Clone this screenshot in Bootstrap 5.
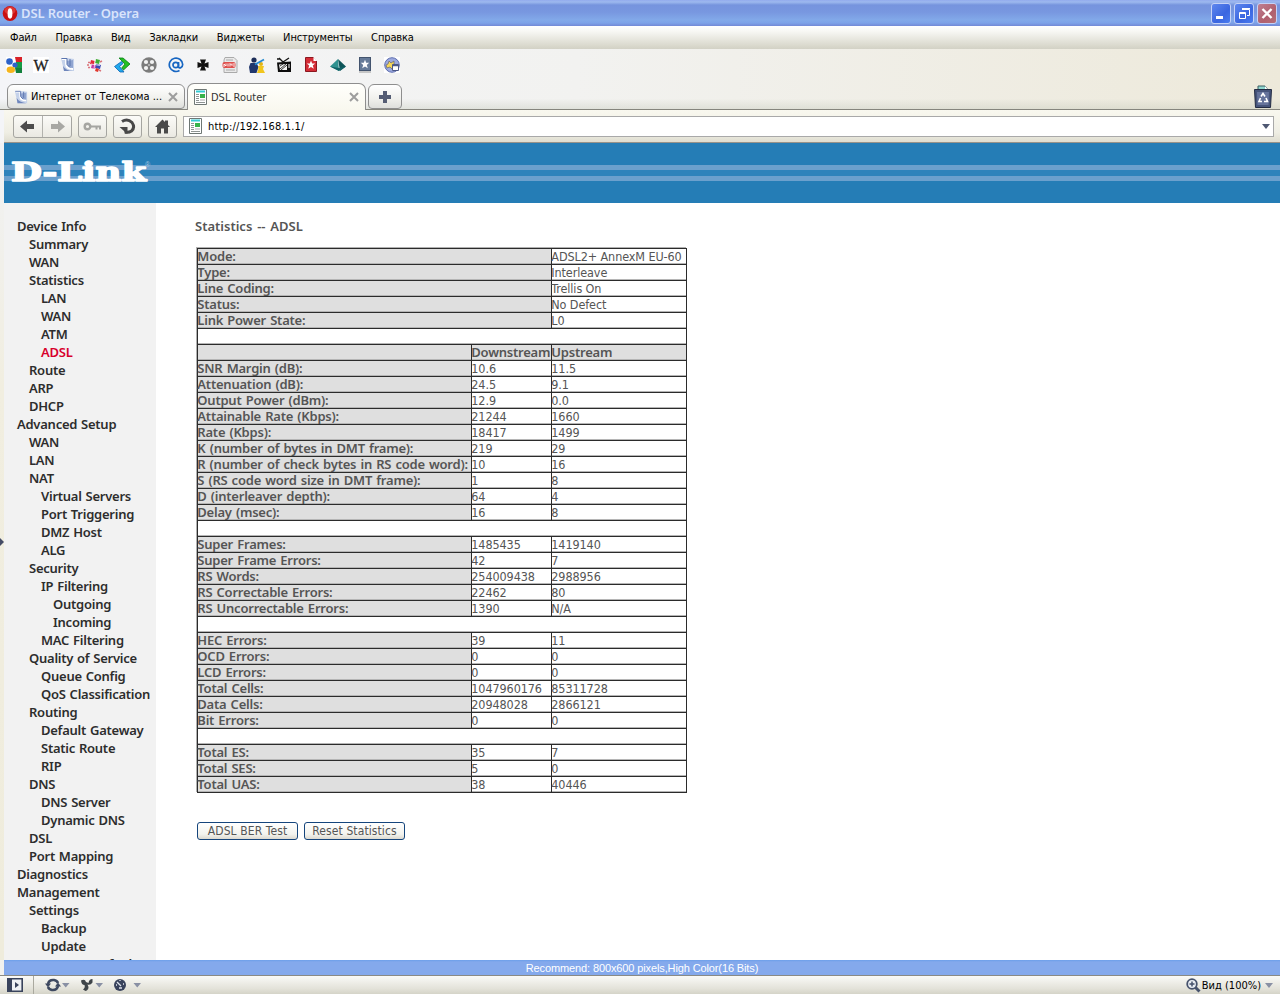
<!DOCTYPE html>
<html lang="ru">
<head>
  <meta charset="UTF-8" />
  <meta name="viewport" content="width=device-width, initial-scale=1.0"/>
  <title>DSL Router</title>

  <!-- Bootstrap CSS -->
  <link href="https://cdn.jsdelivr.net/npm/bootstrap@5.3.3/dist/css/bootstrap.min.css" rel="stylesheet" />

  <style>
    body {
      height: 994px;
      font-family: "DejaVu Sans Condensed", "DejaVu Sans", sans-serif;
      font-size: 11px;
      line-height: 1;
      color: #000;
      background: #f1f1ee;
    }

    svg { display: block; flex: none; }

    /* Window title */
    .titlebar {
      height: 26px;
      padding: 1px 3px 0 2px;
      background: linear-gradient(#93abee 0, #9db9ee 2px, #7694de 5px, #7897e0 12px, #82a9e9 20px, #7da2e8 23px, #7289d6 26px);
    }
    .titlebar .caption {
      font-family: "Noto Sans", sans-serif;
      font-weight: 600;
      font-size: 13px;
      letter-spacing: -.12px;
      color: #d9e4fb;
      margin-left: 3px;
    }
    .winbtn {
      width: 20px;
      height: 21px;
      border: 1px solid #c5d2f7;
      border-radius: 3px;
      background: linear-gradient(135deg, #5f87ee, #3a66e0 60%, #4a7cf0);
    }
    .winbtn.shut { background: linear-gradient(135deg, #bf7f92, #b0606e 60%, #b56f78); }

    /* Menu */
    .menubar {
      height: 23px;
      padding-left: 10px;
      gap: 18.6px;
      letter-spacing: -.13px;
      background: linear-gradient(#fff 0, #f6f6f2 6px, #d9d8cc 20px, #d2d1c5 23px);
    }

    .chrome { background: linear-gradient(90deg, #f4f5f8 0, #f2f2f0 45%, #ede9da 100%); }
    .bookmarks {
      height: 34px;
      padding: 0 0 2px 6px;
      gap: 11px;
    }
    .bookmarks svg { width: 16px; height: 16px; }

    /* Tabs */
    .tabstrip {
      height: 27px;
      padding-left: 7px;
      border-bottom: 1px solid #85857d;
      background: linear-gradient(transparent 60%, rgba(190, 195, 180, .35));
    }
    .pagetab {
      height: 25px;
      border: 1px solid #8e8e8e;
      border-radius: 6px 6px 4px 4px;
      background: linear-gradient(#fff, #f0f0ec 60%, #dedfdc);
      padding: 0 6px 0 6px;
    }
    .pagetab.current {
      height: 27px;
      margin-bottom: -1px;
      border-bottom: 0;
      border-radius: 7px 7px 0 0;
      background: linear-gradient(#fffffc, #f9f8ef);
      color: #333;
    }
    .tabicon { margin-right: 3px; }

    /* Address row */
    .addressrow {
      height: 33px;
      padding: 0 6px 0 9px;
      margin-left: 4px;
      border-bottom: 1px solid #97928a;
      background: linear-gradient(#f9f8ef, #efeee4 70%, #dfddd0);
    }
    .tool {
      height: 23px;
      width: 29px;
      border: 1px solid #a5a5a0;
      border-radius: 3px;
      background: linear-gradient(#fbfbf8, #eae9e2);
    }
    .urlfield {
      height: 21px;
      border: 1px solid #a9a9a9;
      background: #fff;
      padding: 0 3px 0 4px;
    }
    .url { letter-spacing: .16px; }

    /* Router page */
    .gutter { width: 4px; padding-bottom: 20px; background: linear-gradient(#f1f2f4, #f1eee0 30%, #efecdc); }
    .banner {
      height: 60px;
      background: linear-gradient(#257db6 0 22px, #6ba0cd 22px 27px, #2e83bb 27px 33px, #6ba0cd 33px 38px, #257db6 38px);
    }
    .sidemenu {
      width: 152px;
      height: 757px;
      padding-top: 14px;
      background: #f2f2f2;
      font: 600 13px/18px "Noto Sans", sans-serif;
      letter-spacing: -.25px;
      word-spacing: .8px;
      color: #2d2d2d;
    }
    .sidemenu div { height: 18px; white-space: nowrap; }
    .lv0 { padding-left: 13px; }
    .lv1 { padding-left: 25px; }
    .lv2 { padding-left: 37px; }
    .lv3 { padding-left: 49px; }
    .here { color: #d8002c; }

    .report { padding: 14px 0 0 39px; color: #555; font-size: 12.5px; }
    .report h1 { font: 600 13px/18px "Noto Sans", sans-serif; word-spacing: 1.5px; margin: 0 0 13px; }
    .stats {
      width: 490px;
      margin-left: 2px;
      table-layout: fixed;
      border-collapse: collapse;
      line-height: 15px;
      letter-spacing: -.1px;
      box-shadow: -1px -1px #b0b0b0;
    }
    .stats td, .stats th {
      height: 16px;
      padding: 0;
      border: 1px solid #2b2b2b;
      box-shadow: inset 0 -1px #b5b5b5;
      white-space: nowrap;
      text-indent: -.7px;
    }
    .stats th {
      background: #dfdfdf;
      font: 600 13px/15px "Noto Sans", sans-serif;
      letter-spacing: -.22px;
      word-spacing: 1px;
    }
    .formbtn {
      width: 101px;
      height: 18px;
      border: 1px solid #15457c;
      border-radius: 3px;
      background: linear-gradient(#fff, #f3f3ee 70%, #dcd9cf);
      color: #555;
      font-size: 12px;
      letter-spacing: .1px;
      padding: 0;
    }

    .hintbar {
      height: 15px;
      margin-left: 4px;
      background: linear-gradient(#6c9fea, #84a9ec 2px);
      color: #fff;
      font: 11px/17px "Liberation Sans", Arial, sans-serif;
      letter-spacing: -.12px;
    }
    .statusrow {
      height: 19px;
      padding: 0 7px;
      border-top: 1px solid #8a8a84;
      background: linear-gradient(#fafaf7, #e3e2d9 70%, #d5d4c8);
    }
  </style>
</head>
<body class="d-flex flex-column overflow-hidden">

  <!-- Title -->
  <header class="titlebar d-flex align-items-center">
    <svg width="16" height="16" viewBox="0 0 16 16"><ellipse cx="8" cy="7.500" rx="7.300" ry="7.500" fill="#c90f12"/><ellipse cx="8" cy="4.500" rx="5.500" ry="3.800" fill="#e9504a" opacity=".6"/><ellipse cx="8" cy="7.500" rx="2.400" ry="5.200" fill="#fff"/></svg>
    <span class="caption">DSL Router - Opera</span>
    <div class="d-flex ms-auto" style="gap:3px">
      <span class="winbtn"><svg width="18" height="19"><rect x="4" y="12" width="7" height="3" fill="#fff"/></svg></span>
      <span class="winbtn"><svg width="18" height="19" fill="none" stroke="#fff"><path d="M7 5.500h7.500v6H12M7 4.500h8"/><path d="M4.500 8.500h6v6h-6zM4 9.500h7"/></svg></span>
      <span class="winbtn shut"><svg width="18" height="19"><path d="M4.500 5l9 9M13.500 5l-9 9" stroke="#fff" stroke-width="2.400"/></svg></span>
    </div>
  </header>

  <!-- Menu -->
  <nav class="menubar d-flex align-items-center">
    <span>Файл</span><span>Правка</span><span>Вид</span><span>Закладки</span><span>Виджеты</span><span>Инструменты</span><span>Справка</span>
  </nav>

  <div class="chrome">
    <!-- Bookmarks -->
    <div class="bookmarks d-flex align-items-center">
      <svg viewBox="0 0 16 16"><path d="M7 0h9v5H7z" fill="#d82027"/><path d="M9 5h7v6H9z" fill="#169b45"/><path d="M9 11h7v5H8z" fill="#12803b"/><path d="M0 0h9l1 5-1 6 1 5H0z" fill="#fff"/><circle cx="3.500" cy="4.500" r="3.300" fill="#2c62c9"/><circle cx="9" cy="8" r="2.600" fill="#2c62c9"/><ellipse cx="4.800" cy="12.700" rx="4.200" ry="3.200" fill="#f5b51c"/></svg>
      <svg viewBox="0 0 16 16"><rect width="16" height="16" fill="#fff"/><text x=".5" y="13.500" font-family="Liberation Serif, serif" font-size="16" fill="#222" stroke="#222" stroke-width=".3" textLength="15" lengthAdjust="spacingAndGlyphs">W</text></svg>
      <svg viewBox="0 0 16 16"><path d="M1 1l6 0 7 1v12H4z" fill="#c5d2ea"/><path d="M3 9q3 5 10 5H4z" fill="#6f86bb"/><path d="M7 4l6-1v9q-5-1-6-5z" fill="#8fa4d0"/><path d="M2 2h4v5q0 5 7 5" fill="none" stroke="#fff" stroke-width="1.800"/><path d="M1.500 1.500h5.500v6l3 3M10 2v7" fill="none" stroke="#5a74ae"/></svg>
      <svg viewBox="0 0 16 16"><path d="M4 3l4 1-1 4-4-1z" fill="#e02b39"/><path d="M9 2l4 1-1 4-4-1z" fill="#3fae35"/><path d="M9 7l5 1-1 4-5-1z" fill="#3b49b5"/><path d="M5 7l4 1-1 4-4-1z" fill="#c438a6"/><path d="M9 11l3 1-1 3-3-1z" fill="#e1382d"/><path d="M1 5.500h2M0 8h2M1 10.500h2M13 5l2-1M12 13l2 1" stroke="#d9757c" stroke-width="1.400"/><path d="M8 3L7 13M4 7l9 1.500" stroke="#fff" stroke-width=".7"/></svg>
      <svg viewBox="0 0 16 16"><path d="M5 1h4l7 6-6.500 6-1.800-2L11 7z" fill="#25c023" stroke="#087f18" stroke-width=".8"/><path d="M7.500 4.500l1.500 2-3.500 3 4.500 5.500H6L.5 9.500z" fill="#20a9ec" stroke="#0a61b4" stroke-width=".8"/></svg>
      <svg viewBox="0 0 16 16"><circle cx="8" cy="8" r="7.700" fill="#7c7c7c"/><g fill="#f3f3f3"><circle cx="5" cy="5" r="2.100"/><circle cx="11" cy="5" r="2.100"/><circle cx="5" cy="11" r="2.100"/><circle cx="11" cy="11" r="2.100"/><circle cx="8" cy="8" r=".8"/></g></svg>
      <svg viewBox="0 0 16 16" fill="none" stroke="#1766c2" stroke-width="1.700"><circle cx="7.700" cy="8" r="2.700"/><path d="M10.500 5v4.500q.3 1.800 2 1.400Q14.700 10 14.700 7.500A6.700 6.700 0 1 0 11.500 13.500"/></svg>
      <svg viewBox="0 0 16 16"><path d="M5 2.500h6L9.500 6.500l4-1.500v6l-4-1.500 1.500 4H5l1.500-4-4 1.500V5l4 1.500z" fill="#111"/></svg>
      <svg viewBox="0 0 16 16"><path d="M3 .5h9l3 3v12H2V3z" fill="#e9e9e9" stroke="#aaa"/><path d="M4 3h7M4 13h9" stroke="#aaa"/><rect x=".5" y="5" width="13" height="6" rx="2" fill="#df4f4c"/><path d="M2 10V7l2 2V6.500M6 6.500v3M8 9.500v-3l2 2v-2M12 6v4" stroke="#fff" fill="none" stroke-width=".9"/></svg>
      <svg viewBox="0 0 16 16"><circle cx="5" cy="3" r="2.600" fill="#1c2d58"/><path d="M1.500 6h6l2 4-2 6H1L0 10z" fill="#20376d"/><circle cx="12" cy="7" r="2" fill="#e2b416"/><path d="M9 9h6l-1 3 2 4H8l1.500-4z" fill="#f1c51d"/><path d="M6 7.500l9-5" stroke="#268bd2" stroke-width="1.800"/></svg>
      <svg viewBox="0 0 16 16"><path d="M1 5.500l14-1V15H2z" fill="#0c0c0c"/><path d="M3 7.500l8-.5v6H4z" fill="#f6f6f6"/><path d="M4 12l6-5M5 13l6-5M4 9l3-2" stroke="#222" stroke-width=".9"/><path d="M7 5L3 1M7 5l6-4M1 2h3" stroke="#111" stroke-width="1.300"/><path d="M12 8h2M12 10h2" stroke="#fff"/></svg>
      <svg viewBox="0 0 16 16"><path d="M2.500.5h8l3 3v11h-11z" fill="#d42c36" stroke="#8b1820"/><path d="M10.500 0v4h4z" fill="#fff"/><path d="M8 3.500l1.200 3h3L9.800 8.600l1 3.200L8 10l-2.800 1.800 1-3.200L3.800 6.500h3z" fill="#fff"/></svg>
      <svg viewBox="0 0 16 16"><path d="M8 2l8 7.500-6 4.500z" fill="#0e5559"/><path d="M8 2L0 9.500l9 4.500z" fill="#2f9290"/><path d="M0 9.500l9 4.500 7-4.500-7 1.500z" fill="#116367"/></svg>
      <svg viewBox="0 0 16 16"><rect x="2.500" y=".5" width="11" height="13" fill="#657a98" stroke="#43546e"/><path d="M2 15h12" stroke="#999"/><path d="M8 2.800l1.200 3h3L9.800 8l1 3.200L8 9.400l-2.800 1.800 1-3.200-2.400-2.200h3z" fill="#fff"/></svg>
      <svg viewBox="0 0 16 16"><rect width="16" height="16" fill="#fff"/><circle cx="8" cy="8" r="7.300" fill="#9ca9de" stroke="#5e6eae"/><path d="M2 8l2-1 1-3 2 2 3-2v3l2 1-3 1-1 3-2-2-3 1z" fill="#f4d65a" stroke="#68676b" stroke-width=".7"/><path d="M8.500 7.500h6v6h-6z" fill="#fff" stroke="#4c5886"/><path d="M8 8.500h7" stroke="#4c5886" stroke-width="1.500"/></svg>
    </div>

    <!-- Tabs -->
    <div class="tabstrip d-flex align-items-end">
      <div class="pagetab d-flex align-items-center" style="width:178px">
        <svg class="tabicon" width="14" height="16" viewBox="0 0 16 16"><path d="M1 1l6 0 8 1v13H4z" fill="#c5d2ea"/><path d="M3 9q3 5 11 6H4z" fill="#6f86bb"/><path d="M8 4l6-1v9q-5-1-6-5z" fill="#8fa4d0"/><path d="M2 2h5v5q0 5 7 5" fill="none" stroke="#fff" stroke-width="1.800"/><path d="M1.500 1.500h6v6l3 3M11 2v7" fill="none" stroke="#5a74ae"/></svg>
        <span class="text-nowrap">Интернет от Телекома ...</span>
        <svg class="ms-auto" width="10" height="10" stroke="#9d9d9d" stroke-width="2"><path d="M1 1l8 8M9 1L1 9"/></svg>
      </div>
      <div class="pagetab current d-flex align-items-center" style="width:179px;margin-left:2px">
        <svg width="13" height="16" viewBox="0 0 13 16" style="margin-right:4px"><path d="M.5.5h12v15H.5z" fill="#fff" stroke="#6e7774"/><path d="M2 2.500h9" stroke="#35cbd1" stroke-width="2"/><path d="M2 5.500h3M2 7.500h3M2 9.500h3M2 11.500h3M2 13.500h9" stroke="#8e9492"/><path d="M6 5h5v4H6z" fill="#37b34a"/><path d="M6 11h5" stroke="#aaa"/></svg>
        <span class="text-nowrap">DSL Router</span>
        <svg class="ms-auto" width="10" height="10" stroke="#9d9d9d" stroke-width="2"><path d="M1 1l8 8M9 1L1 9"/></svg>
      </div>
      <div class="pagetab d-flex align-items-center justify-content-center p-0" style="width:34px;margin-left:2px">
        <svg width="12" height="12"><path d="M4 0h4v4h4v4H8v4H4V8H0V4h4z" fill="#555d74"/></svg>
      </div>
      <svg class="ms-auto" width="18" height="24" viewBox="0 0 18 24" style="margin-right:8px"><path d="M4 5V1h7l3 4" fill="#8fd6cf" stroke="#3c5e63"/><path d="M11 1l3 4h-3z" fill="#fff"/><path d="M.5 4.500h17L16.500 22.500h-15z" fill="#46547a" stroke="#222b42"/><path d="M3 7h12l-.5 13h-11z" fill="#65739b"/><path d="M7 11.500l2-3 2 3M12 13l1.500 3.500H10M8 16.500H5L6.500 13" fill="none" stroke="#fff" stroke-width="1.600"/></svg>
    </div>

    <!-- Address row -->
    <div class="addressrow d-flex align-items-center">
      <div class="tool d-flex align-items-center" style="width:59px">
        <svg width="57" height="21"><path d="M28.500 0v21" stroke="#b2b2ad"/><path d="M6 10.500L13 4.500V8h7v5h-7v3.500z" fill="#4d4d4d"/><path d="M51 10.500L44 4.500V8h-7v5h7v3.500z" fill="#a8a8a4"/></svg>
      </div>
      <div class="tool" style="margin-left:6px"><svg width="27" height="21"><circle cx="8.500" cy="10.500" r="2.800" fill="none" stroke="#a5a5a1" stroke-width="2.400"/><path d="M12 10.500h10M17.500 11v2.500M21 11v2.500" stroke="#a5a5a1" stroke-width="2"/></svg></div>
      <div class="tool" style="margin-left:6px"><svg width="27" height="21"><path d="M8 5.500Q13.500 2 18 6.500q3.500 5-.5 8.500-3 2-6.500 1" fill="none" stroke="#484848" stroke-width="3"/><path d="M5.500 11h8v6.500h-2.500l-1-2.500z" fill="#484848"/></svg></div>
      <div class="tool" style="margin-left:6px"><svg width="27" height="21"><path d="M6 11l7.500-7.500L16 6V4.500h3V9l2 2h-2v6.500h-4v-5h-3v5H8V11z" fill="#4a4a4a"/></svg></div>
      <div class="urlfield d-flex align-items-center flex-grow-1" style="margin-left:6px">
        <svg width="13" height="16" viewBox="0 0 13 16" style="margin:0 6px 0 1px"><path d="M.5.5h12v15H.5z" fill="#fff" stroke="#6e7774"/><path d="M2 2.500h9" stroke="#35cbd1" stroke-width="2"/><path d="M2 5.500h3M2 7.500h3M2 9.500h3M2 11.500h3M2 13.500h9" stroke="#8e9492"/><path d="M6 5h5v4H6z" fill="#37b34a"/><path d="M6 11h5" stroke="#aaa"/></svg>
        <span class="url">http://192.168.1.1/</span>
        <svg class="ms-auto" width="8" height="5"><path d="M0 0h8L4 5z" fill="#4e5872"/></svg>
      </div>
    </div>
  </div>

  <!-- Router page -->
  <main class="d-flex bg-white flex-grow-1" style="min-height:0">
    <div class="gutter d-flex align-items-center"><svg width="4" height="8"><path d="M0 0l4 4-4 4z" fill="#444c66"/></svg></div>
    <div class="flex-grow-1 overflow-hidden">
      <div class="banner">
        <svg width="160" height="60"><text x="7" y="37.500" font-family="DejaVu Serif, serif" font-weight="700" font-size="25.500" fill="#fff" stroke="#fff" stroke-width="1.500" stroke-linejoin="round" textLength="135" lengthAdjust="spacingAndGlyphs">D-Link</text><text x="141" y="24" font-family="Liberation Sans, sans-serif" font-size="7" fill="#a9c8e2">®</text></svg>
      </div>
      <div class="d-flex">
        <nav class="sidemenu overflow-hidden" id="sidemenu"></nav>
        <section class="report">
          <h1>Statistics -- ADSL</h1>
          <table class="stats">
            <colgroup><col style="width:274px"><col style="width:80px"><col style="width:135px"></colgroup>
            <tbody id="stats"></tbody>
          </table>
          <div class="d-flex" style="gap:6px;margin:29px 0 0 2px">
            <button class="formbtn">ADSL BER Test</button>
            <button class="formbtn">Reset Statistics</button>
          </div>
        </section>
      </div>
    </div>
  </main>

  <div class="hintbar text-center">Recommend: 800x600 pixels,High Color(16 Bits)</div>

  <!-- Status row -->
  <footer class="statusrow d-flex align-items-center">
    <svg width="134" height="18" viewBox="0 0 134 18">
      <path d="M.8 2.800h14.400v12.400H.8z" fill="#eef0f3" stroke="#39435c" stroke-width="1.600"/><path d="M1 3h4v12H1z" fill="#39435c"/><path d="M8 6l4 3-4 3z" fill="#39435c"/>
      <path d="M26.500 0v18" stroke="#aaa99f"/>
      <path d="M41 8q1-4.500 6-4 3 .5 4 3M51 10q-1 4.500-6 4-3-.5-4-3" fill="none" stroke="#3e4960" stroke-width="2.600"/><path d="M38 7.500h6l-3 4zM48 10.500h6l-3-4z" fill="#3e4960"/>
      <path d="M74 4.500q4-2 5 1.500l2.500 1q.5-4 4-4v3.500q-2 3-5 2l1 2.500q0 3-3 4l-2.500-1.500q2.500-2 1.500-4.500-3 0-3.500-4.500z" fill="#3e4448"/>
      <circle cx="113" cy="9" r="6" fill="#39435c"/><path d="M110 6l4 4M113 4v1M117 8h-1M109 9h1M112 12h3" stroke="#dfe4ec" stroke-width="1.300"/>
      <path d="M55 7h7.500l-3.750 4.500zM88.500 7h7.500l-3.750 4.500zM126.500 7h7.500l-3.750 4.500z" fill="#8990a4"/>
    </svg>
    <svg class="ms-auto" width="15" height="15" viewBox="0 0 15 15" style="margin-right:1px"><circle cx="6" cy="6" r="4.800" fill="#e9edf3" stroke="#46526c" stroke-width="1.800"/><path d="M9.500 9.500l4 4" stroke="#46526c" stroke-width="3"/><path d="M3.500 6h5M6 3.500v5" stroke="#46526c" stroke-width="1.500"/></svg>
    <span>Вид (100%)</span>
    <svg width="8" height="5" style="margin-left:4px"><path d="M0 0h8L4 5z" fill="#8990a4"/></svg>
  </footer>

  <!-- Bootstrap JS -->
  <script src="https://cdn.jsdelivr.net/npm/bootstrap@5.3.3/dist/js/bootstrap.bundle.min.js"></script>

  <script>
    // [level, label]
    const menu = [
      [0, "Device Info"], [1, "Summary"], [1, "WAN"], [1, "Statistics"], [2, "LAN"], [2, "WAN"], [2, "ATM"], [2, "ADSL"],
      [1, "Route"], [1, "ARP"], [1, "DHCP"], [0, "Advanced Setup"], [1, "WAN"], [1, "LAN"], [1, "NAT"],
      [2, "Virtual Servers"], [2, "Port Triggering"], [2, "DMZ Host"], [2, "ALG"], [1, "Security"], [2, "IP Filtering"],
      [3, "Outgoing"], [3, "Incoming"], [2, "MAC Filtering"], [1, "Quality of Service"], [2, "Queue Config"],
      [2, "QoS Classification"], [1, "Routing"], [2, "Default Gateway"], [2, "Static Route"], [2, "RIP"], [1, "DNS"],
      [2, "DNS Server"], [2, "Dynamic DNS"], [1, "DSL"], [1, "Port Mapping"], [0, "Diagnostics"], [0, "Management"],
      [1, "Settings"], [2, "Backup"], [2, "Update"], [2, "Restore Default"]
    ];

    // Empty array = blank separator row
    const rows = [
      ["Mode:", "ADSL2+ AnnexM EU-60"], ["Type:", "Interleave"], ["Line Coding:", "Trellis On"],
      ["Status:", "No Defect"], ["Link Power State:", "L0"], [],
      ["", "Downstream", "Upstream"],
      ["SNR Margin (dB):", "10.6", "11.5"], ["Attenuation (dB):", "24.5", "9.1"], ["Output Power (dBm):", "12.9", "0.0"],
      ["Attainable Rate (Kbps):", "21244", "1660"], ["Rate (Kbps):", "18417", "1499"],
      ["K (number of bytes in DMT frame):", "219", "29"], ["R (number of check bytes in RS code word):", "10", "16"],
      ["S (RS code word size in DMT frame):", "1", "8"], ["D (interleaver depth):", "64", "4"], ["Delay (msec):", "16", "8"], [],
      ["Super Frames:", "1485435", "1419140"], ["Super Frame Errors:", "42", "7"], ["RS Words:", "254009438", "2988956"],
      ["RS Correctable Errors:", "22462", "80"], ["RS Uncorrectable Errors:", "1390", "N/A"], [],
      ["HEC Errors:", "39", "11"], ["OCD Errors:", "0", "0"], ["LCD Errors:", "0", "0"],
      ["Total Cells:", "1047960176", "85311728"], ["Data Cells:", "20948028", "2866121"], ["Bit Errors:", "0", "0"], [],
      ["Total ES:", "35", "7"], ["Total SES:", "5", "0"], ["Total UAS:", "38", "40446"]
    ];

    document.getElementById("sidemenu").innerHTML = menu.map(([level, label]) =>
      `<div class="lv${level}${label === "ADSL" ? " here" : ""}">${label}</div>`).join("");

    document.getElementById("stats").innerHTML = rows.map(r => {
      if (!r.length) return `<tr><td colspan="3"></td></tr>`;
      if (r.length === 2) return `<tr><th colspan="2">${r[0]}</th><td>${r[1]}</td></tr>`;
      const tag = r[0] ? "td" : "th";
      return `<tr><th>${r[0]}</th><${tag}>${r[1]}</${tag}><${tag}>${r[2]}</${tag}></tr>`;
    }).join("");
  </script>
</body>
</html>
